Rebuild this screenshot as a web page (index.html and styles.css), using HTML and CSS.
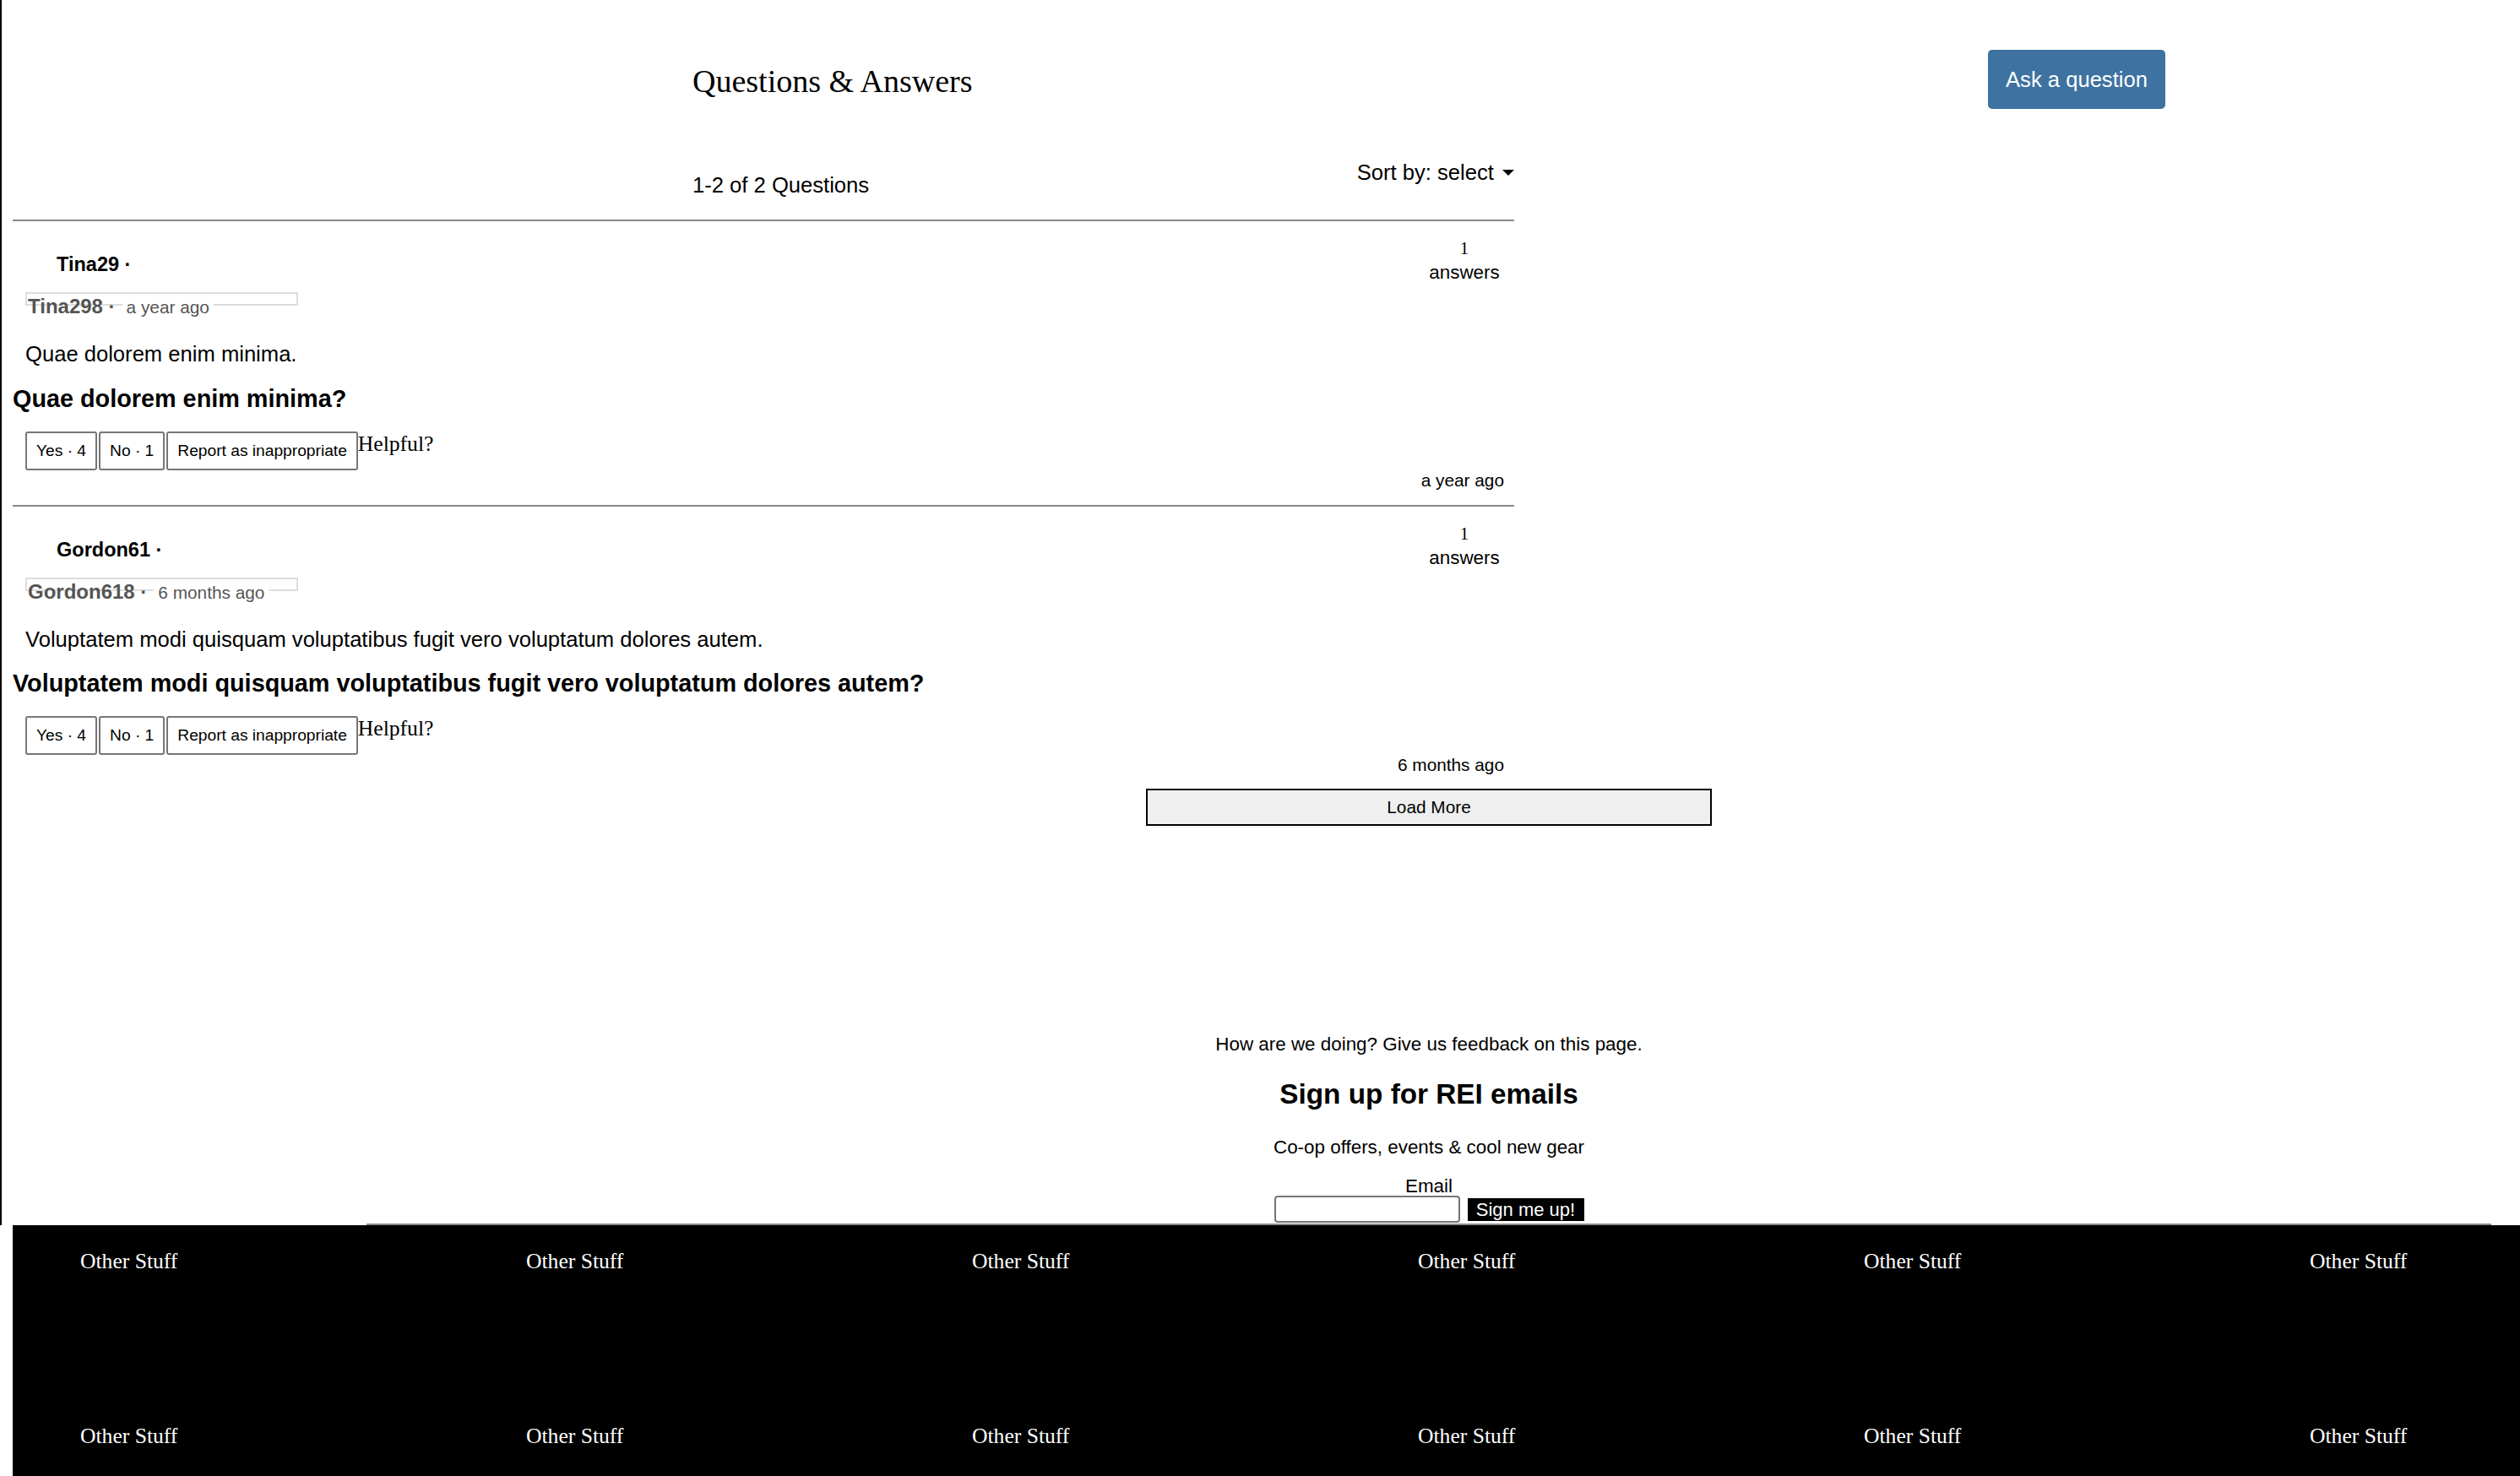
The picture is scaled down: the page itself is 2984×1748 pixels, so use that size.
FILE: index.html
```html
<!DOCTYPE html>
<html lang="en">
<head>
<meta charset="utf-8">
<title>Questions &amp; Answers</title>
<link rel="stylesheet" href="styles.css">
</head>
<body>
<div class="page">
  <header class="qa-header">
    <h2 class="qa-title">Questions &amp; Answers</h2>
    <button class="ask-btn" type="button">Ask a question</button>
  </header>

  <div class="toolbar">
    <div class="count">1-2 of 2 Questions</div>
    <div class="sort">Sort by: select <span class="caret"></span></div>
  </div>

  <div class="question-list">
    <article class="question">
      <div class="q-main">
        <div class="asker">Tina29 ·</div>
        <div class="meta-box"><span class="meta-name">Tina298 ·</span><span class="meta-time">a year ago</span></div>
        <p class="q-body">Quae dolorem enim minima.</p>
        <h3 class="q-title">Quae dolorem enim minima?</h3>
        <div class="actions">
          <button class="act" type="button">Yes · 4</button>
          <button class="act" type="button">No · 1</button>
          <button class="act" type="button">Report as inappropriate</button>
          <span class="helpful">Helpful?</span>
        </div>
      </div>
      <div class="q-side">
        <div class="answers">
          <div class="answers-num">1</div>
          <div class="answers-label">answers</div>
        </div>
        <div class="q-time">a year ago</div>
      </div>
    </article>

    <article class="question">
      <div class="q-main">
        <div class="asker">Gordon61 ·</div>
        <div class="meta-box"><span class="meta-name">Gordon618 ·</span><span class="meta-time">6 months ago</span></div>
        <p class="q-body">Voluptatem modi quisquam voluptatibus fugit vero voluptatum dolores autem.</p>
        <h3 class="q-title">Voluptatem modi quisquam voluptatibus fugit vero voluptatum dolores autem?</h3>
        <div class="actions">
          <button class="act" type="button">Yes · 4</button>
          <button class="act" type="button">No · 1</button>
          <button class="act" type="button">Report as inappropriate</button>
          <span class="helpful">Helpful?</span>
        </div>
      </div>
      <div class="q-side">
        <div class="answers">
          <div class="answers-num">1</div>
          <div class="answers-label">answers</div>
        </div>
        <div class="q-time">6 months ago</div>
      </div>
    </article>
  </div>

  <button class="load-more" type="button">Load More</button>

  <section class="signup">
    <p class="feedback">How are we doing? Give us feedback on this page.</p>
    <h2 class="signup-title">Sign up for REI emails</h2>
    <p class="signup-sub">Co-op offers, events &amp; cool new gear</p>
    <label class="email-label" for="email">Email</label>
    <div class="email-row">
      <input class="email-input" id="email" type="email">
      <button class="signup-btn" type="button">Sign me up!</button>
    </div>
  </section>
  <hr class="footer-rule">
</div>

<footer class="site-footer">
  <div class="foot-cell">Other Stuff</div>
  <div class="foot-cell">Other Stuff</div>
  <div class="foot-cell">Other Stuff</div>
  <div class="foot-cell">Other Stuff</div>
  <div class="foot-cell">Other Stuff</div>
  <div class="foot-cell">Other Stuff</div>
  <div class="foot-cell">Other Stuff</div>
  <div class="foot-cell">Other Stuff</div>
  <div class="foot-cell">Other Stuff</div>
  <div class="foot-cell">Other Stuff</div>
  <div class="foot-cell">Other Stuff</div>
  <div class="foot-cell">Other Stuff</div>
</footer>
</body>
</html>
```

FILE: styles.css
```css
html {
  overflow: hidden;
}

body {
  margin: 0;
  font-family: "Liberation Sans", Arial, sans-serif;
  color: #000;
  background: #fff;
}

.page {
  width: 3354px;
  padding: 59px 0 0 13px;
  border-left: 2px solid #000;
}

/* header */
.qa-header {
  display: flex;
  align-items: center;
  height: 70px;
}

.qa-title {
  margin: 0 0 0 805px;
  padding-top: 4px;
  width: 1534px;
  font-family: "Liberation Serif", "Times New Roman", serif;
  font-weight: 400;
  font-size: 38px;
  line-height: 44px;
}

.ask-btn {
  width: 210px;
  height: 70px;
  padding: 0;
  border: 0;
  border-radius: 5px;
  background: #3e72a0;
  color: #fff;
  font-family: "Liberation Sans", Arial, sans-serif;
  font-size: 25.6px;
}

/* toolbar */
.toolbar {
  width: 1778px;
  height: 131px;
  display: flex;
  justify-content: space-between;
  align-items: flex-start;
}

.count {
  margin: 75px 0 0 805px;
  font-size: 25.6px;
  line-height: 30px;
}

.sort {
  margin-top: 60px;
  display: flex;
  align-items: center;
  font-size: 25.6px;
  line-height: 30px;
  white-space: pre;
}

.caret {
  width: 0;
  height: 0;
  margin-left: 3px;
  border-left: 7px solid transparent;
  border-right: 7px solid transparent;
  border-top: 7px solid #000;
}

/* questions */
.question-list {
  width: 1778px;
}

.question {
  display: flex;
  border-top: 2px solid #888;
  padding: 0 12px 17px 0;
}

.question:last-child {
  padding-bottom: 16px;
}

.q-main {
  flex: 1;
  padding-bottom: 24px;
}

.asker {
  margin: 38px 0 0 52px;
  font-weight: 700;
  font-size: 23.5px;
  line-height: 26px;
}

.meta-box {
  margin: 20px 0 0 15px;
  width: 318px;
  height: 12px;
  padding-left: 1px;
  border: 2px solid #ddd;
  line-height: 29px;
  white-space: nowrap;
}

.meta-name {
  font-weight: 700;
  font-size: 24px;
  color: #555;
}

.meta-time {
  margin-left: 8px;
  padding: 0 5px;
  font-size: 20.8px;
  color: #555;
  background: #fff;
}

.q-body {
  margin: 43px 0 0 15px;
  font-size: 25.6px;
  line-height: 29px;
}

.q-title {
  margin: 21.5px 0 0;
  font-size: 28.8px;
  line-height: 33px;
  font-weight: 700;
}

.actions {
  margin: 22px 0 0 15px;
  display: flex;
  align-items: flex-start;
  gap: 2px;
}

.act {
  padding: 10px 11px;
  border: 2px solid #767676;
  border-radius: 3px;
  background: #fff;
  color: #000;
  font-family: "Liberation Sans", Arial, sans-serif;
  font-size: 19.2px;
  line-height: 22px;
}

.helpful {
  margin-left: -2px;
  font-family: "Liberation Serif", "Times New Roman", serif;
  font-size: 25.6px;
  line-height: 29px;
}

.q-side {
  width: 160px;
  padding-top: 18px;
  display: flex;
  flex-direction: column;
  justify-content: space-between;
  align-items: flex-end;
}

.answers {
  width: 94px;
  text-align: center;
}

.answers-num {
  font-family: "Liberation Serif", "Times New Roman", serif;
  font-size: 20.8px;
  line-height: 27px;
}

.answers-label {
  margin-top: 3px;
  font-size: 22.4px;
  line-height: 26px;
}

.q-time {
  font-size: 20.8px;
  line-height: 24px;
  text-align: right;
  white-space: nowrap;
}

/* load more */
.load-more {
  display: block;
  width: 670px;
  height: 44px;
  margin-left: 1342px;
  padding: 8px;
  border: 2px solid #000;
  background: #efefef;
  color: #000;
  font-family: "Liberation Sans", Arial, sans-serif;
  font-size: 20.8px;
  line-height: 24px;
}

/* signup */
.signup {
  text-align: center;
}

.feedback {
  margin: 246px 0 0;
  font-size: 22.4px;
  line-height: 26px;
}

.signup-title {
  margin: 27px 0 0;
  font-size: 33.3px;
  line-height: 38px;
  font-weight: 700;
}

.signup-sub {
  margin: 31px 0 0;
  font-size: 22.4px;
  line-height: 26px;
}

.email-label {
  display: block;
  margin-top: 22px;
  font-size: 22.4px;
  line-height: 22px;
}

.email-row {
  height: 32px;
  display: flex;
  justify-content: center;
  align-items: center;
  gap: 9px;
}

.email-input {
  box-sizing: border-box;
  width: 220px;
  height: 32px;
  padding: 0 4px;
  border: 2px solid #767676;
  border-radius: 4px;
  background: #fff;
}

.signup-btn {
  width: 138px;
  height: 27px;
  padding: 0;
  border: 0;
  background: #000;
  color: #fff;
  font-family: "Liberation Sans", Arial, sans-serif;
  font-size: 22px;
  line-height: 27px;
}

.footer-rule {
  width: 75%;
  height: 0;
  margin: 1px auto 0;
  border: 0;
  border-top: 2px solid #888;
}

/* footer */
.site-footer {
  width: 3168px;
  margin-left: 15px;
  display: flex;
  flex-wrap: wrap;
  background: #000;
}

.foot-cell {
  box-sizing: border-box;
  width: 528px;
  height: 207px;
  padding: 28px 0 0 80px;
  font-family: "Liberation Serif", "Times New Roman", serif;
  font-size: 25.6px;
  line-height: 30px;
  color: #fff;
}
```
